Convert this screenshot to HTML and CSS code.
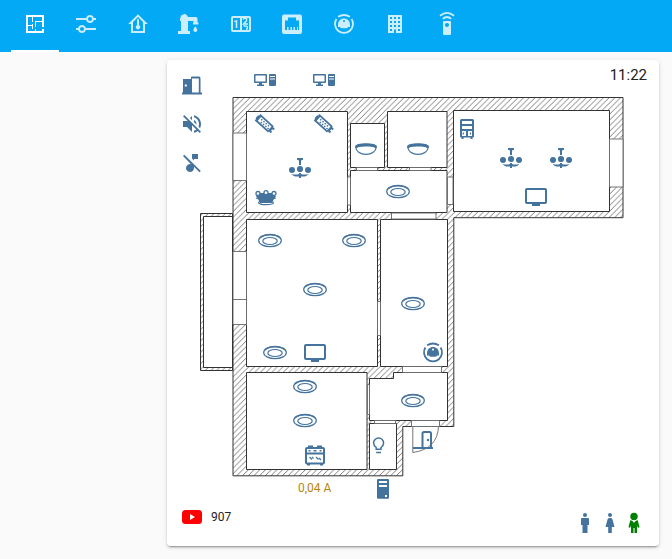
FILE: index.html
```
<!DOCTYPE html>
<html lang="en">
<head>
<meta charset="utf-8">
<title>Home</title>
<link rel="stylesheet" href="styles.css">
</head>
<body>
<nav class="tabs">
  <a class="tab active"><svg viewBox="0 0 24 24"><path d="M10,5V10H9V5H5V13H9V12H10V17H9V14H5V19H12V17H13V19H19V17H21V21H3V3H21V15H19V10H13V15H12V9H19V5H10Z"/></svg></a>
  <a class="tab"><svg viewBox="0 0 24 24"><path d="M8 13C6.14 13 4.59 14.28 4.14 16H2V18H4.14C4.59 19.72 6.14 21 8 21S11.41 19.72 11.86 18H22V16H11.86C11.41 14.28 9.86 13 8 13M8 19C6.9 19 6 18.1 6 17C6 15.9 6.9 15 8 15S10 15.9 10 17C10 18.1 9.1 19 8 19M19.86 6C19.41 4.28 17.86 3 16 3S12.59 4.28 12.14 6H2V8H12.14C12.59 9.72 14.14 11 16 11S19.41 9.72 19.86 8H22V6H19.86M16 9C14.9 9 14 8.1 14 7C14 5.9 14.9 5 16 5S18 5.9 18 7C18 8.1 17.1 9 16 9Z"/></svg></a>
  <a class="tab"><svg viewBox="0 0 24 24"><path fill-rule="evenodd" d="M12 2.2 21.8 12H19V21H5V12H2.2ZM12 5 7 10V19H17V10Z"/><path d="M11 8a1 1 0 0 1 2 0v5.3a2.1 2.1 0 1 1-2 0Z"/></svg></a>
  <a class="tab"><svg viewBox="0 0 24 24"><path d="M3.500 4.500Q3.500 3.200 5 3.200H5.500V2.700Q7.500 1.500 9.500 2.700V3.200Q10.800 3.200 10.800 5H19Q20.500 5 20.500 6.500V10.500H21.500V12.500H16V10.500H16.500V9H11V19H13V22H1V19H4V9H3V6H4Z"/><path d="M18.300 14.200Q20.300 16.700 20.300 18a2 2 0 0 1-4 0Q16.300 16.700 18.300 14.200Z"/></svg></a>
  <a class="tab"><svg viewBox="0 0 24 24"><path fill-rule="evenodd" d="M4 4H20a2 2 0 0 1 2 2V18a2 2 0 0 1-2 2H4a2 2 0 0 1-2-2V6a2 2 0 0 1 2-2ZM4 6V18H11V6ZM13 6V18H20V6Z"/><path d="M6.700 16V9.800L5.300 10.300V8.800L8.300 8V16Z"/><path class="line" d="M14 7.500Q14.500 6 16.500 6.300Q18.500 7 17.300 9L14.500 12H19M14.500 14Q18.500 13.500 18.500 15.500Q18.500 17 17 17.500"/></svg></a>
  <a class="tab"><svg viewBox="0 0 24 24"><path fill-rule="evenodd" d="M4 2.500H20a2 2 0 0 1 2 2V20a2 2 0 0 1-2 2H4a2 2 0 0 1-2-2V4.500a2 2 0 0 1 2-2ZM5 18H7V15H8.500V18H10.500V15H12V18H13.500V15H15V18H17V15H18V18H19V8.500H16V5.500H8V8.500H5Z"/></svg></a>
  <a class="tab"><svg viewBox="0 0 24 24"><use href="#vacuum" x="12" y="12"/></svg></a>
  <a class="tab"><svg viewBox="0 0 24 24"><path fill-rule="evenodd" d="M5 3V21H11V17.500H13V21H19V3ZM7 5H9V7H7ZM11 5H13V7H11ZM15 5H17V7H15ZM7 9H9V11H7ZM11 9H13V11H11ZM15 9H17V11H15ZM7 13H9V15H7ZM11 13H13V15H11ZM15 13H17V15H15ZM7 17H9V19H7ZM15 17H17V19H15Z"/></svg></a>
  <a class="tab"><svg viewBox="0 0 24 24"><path fill-rule="evenodd" d="M9 9H15a1 1 0 0 1 1 1V22a1 1 0 0 1-1 1H9a1 1 0 0 1-1-1V10a1 1 0 0 1 1-1ZM12 11a2 2 0 1 0 .01 0Z"/><path class="ray" d="M7.800 6.900Q12 3.200 16.200 6.900M5 3.800Q12-2 19 3.800"/></svg></a>
</nav>
<main class="page">
<section class="card">
<svg class="plan" viewBox="167 60 492 486">
  <defs>
    <pattern id="hatch" width="5.7" height="5.7" patternUnits="userSpaceOnUse"><path class="hatch" d="M-1 6.700 6.700-1M-1 1 1-1M4.700 6.700 6.700 4.700"/></pattern>
    <g id="ring"><ellipse class="s12" rx="11.300" ry="6.200"/><ellipse class="s12" cy=".5" rx="7.200" ry="3.500"/><path class="s12" d="M-10-2.500Q-7-5.700 0-5.700T10-2.500"/></g>
    <g id="dome"><path d="M-11-1.500C-11-6 11-6 11-1.500L10 .5C8.500-2.200-8.500-2.200-10 .5Z"/><path class="s12" d="M-10.300-1C-10 3-6 6.300 0 6.300S10 3 10.300-1"/></g>
    <g id="chandelier"><path d="M-3-12H3V-10.300L1-9.500V-5H-1V-9.500L-3-10.300Z"/><circle cx="-8" r="3"/><circle cy="-1" r="3.100"/><circle cx="8" r="3"/><path d="M-8.500 4Q-4 5-1 4V3H1V4Q4 5 8.500 4Q6.500 7 1 6.500V8H-1V6.500Q-6.500 7-8.500 4Z"/></g>
    <g id="strip" transform="rotate(42)"><path fill-rule="evenodd" d="M-10-4.300H8V-3H10.500V-1H9V1H10.500V3H8V4.300H-10V2H-11V-2H-10ZM-7.500-2.500V2.500H6.500V-2.500Z"/><path class="dots" d="M-6-1H6M-4.500 1.300H6"/></g>
    <g id="tv"><rect class="s2" x="-10" y="-8" width="20" height="14" rx="1"/><path d="M-4 6H4V9H-4Z"/></g>
    <g id="pc"><path fill-rule="evenodd" d="M-10-6H1Q2-6 2-5V2Q2 3 1 3H-3V4.500H-1V6H-8V4.500H-6V3H-10Q-11 3-11 2V-5Q-11-6-10-6ZM-9.500-4.500V1.500H.5V-4.500ZM5-6H10Q11-6 11-5V5Q11 6 10 6H5Q4 6 4 5V-5Q4-6 5-6ZM5-4V-3H10V-4ZM5-1.500V-.5H10V-1.500Z"/></g>
    <g id="vacuum"><path class="v" d="M-7.600-4.900A9 9 0 1 0 7.600-4.900M-5.900-7.200Q0-10.800 5.900-7.200"/><path fill-rule="evenodd" d="M-6 1C-6-7.600 6-7.600 6 1V3H4Q3.500 4.300 2 4.300H-2Q-3.500 4.300-4 3H-6ZM0-4a1 1 0 1 0 .01 0Z"/></g>
    <g id="man"><circle cy="-8" r="2"/><path d="M-3-5H3Q4-5 4-4V2H2.500V10H-2.500V2H-4V-4Q-4-5-3-5Z"/></g>
    <g id="woman"><circle cy="-8" r="2"/><path d="M-1-5H1Q2-5 2.500-3.500L4.500 4H1.800V10H-1.800V4H-4.500L-2.500-3.500Q-2-5-1-5Z"/></g>
  </defs>

  <path class="wall" d="M200.500 213.500H232.500V370.500H200.500Z"/>
  <path class="room" d="M203.500 216.500H232.500V367.500H203.500Z"/>
  <path class="wall" d="M233 97.500H623V217.700H453.800V426.500H402.800V475.800H233Z"/>
  <g class="room">
    <path d="M246.500 111.500H347.500V212.500H246.500Z"/>
    <path d="M350.500 123.500H384.500V167.500H350.500Z"/>
    <path d="M387.500 111.500H447V167.500H387.500Z"/>
    <path d="M350.500 170.500H447V212.500H350.500Z"/>
    <path d="M453.500 110.500H609.500V211.500H453.500Z"/>
    <path d="M246.500 219.500H377.500V366.500H246.500Z"/>
    <path d="M380.500 219.500H447.500V366.500H380.500Z"/>
    <path d="M246.500 372.500H367V469.500H246.500Z"/>
    <path d="M369.500 378.500H393.500V372.500H447.500V420.500H369.500Z"/>
    <path d="M369.500 423.500H396.500V469.500H369.500Z"/>
  </g>
  <g class="opening">
    <path d="M233 133H246.500V180.500H233ZM233 251.500H246.500V324.500H233ZM233 299.500H246.500M609.500 139H623V187H609.500Z"/>
    <path d="M347.500 177H350.500V205H347.500ZM356.500 167.500H377.500V170.500H356.500ZM409.500 167.500H431V170.500H409.500ZM447.500 177H453V204.500H447.500Z"/>
    <path d="M391.500 213H436V219H391.500ZM377.500 301.500H380.500V335.500H377.500ZM402.500 366.500H441.500V372.500H402.500Z"/>
    <path d="M367.500 384.500H369.500V414.500H367.500ZM374.500 420.500H395.500V423.500H374.500ZM411.500 420.500H439.500V426.500H411.500Z"/>
    <path d="M412.800 426.500H438.500Q437.500 449 412.800 452.500Z"/>
  </g>

  <g class="icons">
    <path d="M182 92.500H183V79H191V77.500Q191 76.500 192 76.500H199Q200.500 76.500 200.500 78.500V92.500H202V94.500H182Z"/>
    <path class="cut" d="M192 78.500H198.800V92.500H192ZM184.800 84.500H186.800V86.500H184.800Z"/>
    <g transform="translate(180 112)"><path d="M12 4 9.900 6.100 12 8.200M4.300 3 3 4.300 7.700 9H3V15H7L12 20V13.300L16.300 17.500C15.600 18 14.900 18.500 14 18.700V20.800C15.400 20.500 16.600 19.800 17.700 18.900L19.700 21 21 19.700 12 10.700ZM19 12C19 12.900 18.800 13.800 18.500 14.600L20 16.200C20.700 14.900 21 13.500 21 12 21 7.700 18 4.100 14 3.200V5.300C16.900 6.200 19 8.800 19 12M16.500 12C16.500 10.200 15.500 8.700 14 8V10.200L16.500 12.600V12Z"/></g>
    <g transform="translate(180 151)"><path d="M12 3V7.500L14 9.500V8H18V3ZM4.300 3.700 3 5 11 13.200A4 4 0 1 0 14 17V15.700L19.500 21.200 20.800 20Z"/></g>
    <use href="#pc" x="265" y="80"/><use href="#pc" x="324" y="80"/>
    <g transform="translate(265 124)"><use href="#strip"/></g><g transform="translate(324 124)"><use href="#strip"/></g>
    <use href="#chandelier" x="300" y="170"/><use href="#chandelier" x="511" y="160"/><use href="#chandelier" x="561" y="160"/>
    <use href="#dome" x="366" y="148"/><use href="#dome" x="418" y="148"/>
    <use href="#ring" x="398" y="191.500"/><use href="#ring" x="270" y="240.500"/><use href="#ring" x="354" y="240.500"/>
    <use href="#ring" x="315" y="289.500"/><use href="#ring" x="275" y="352.500"/><use href="#ring" x="413" y="303.500"/>
    <use href="#ring" x="305" y="386.500"/><use href="#ring" x="305" y="420.500"/><use href="#ring" x="413" y="400.500"/>
    <use href="#tv" x="536" y="197"/><use href="#tv" x="315" y="353"/>
    <use href="#vacuum" x="433" y="352.500"/>
    <g transform="translate(266 198)"><path d="M-10-2-6-5H6L10-2 8 1 6 5H-6L-8 1Z"/><circle class="bulb" cx="-8" cy="-4.500" r="2"/><circle class="bulb" cx="8" cy="-4.500" r="2"/><circle class="bulb" cy="-5.300" r="2"/><ellipse class="s12" cy="4.800" rx="7.500" ry="1.800"/><path class="s12" d="M-10 0-6 1M10 0 6 1"/></g>
    <path fill-rule="evenodd" d="M461.500 119H472.500Q474 119 474 120.500V136.500Q474 137.500 472.500 137.500V139H470.500V137.500H463.500V139H461.500V137.500Q460 137.500 460 136.500V120.500Q460 119 461.500 119ZM462 121V124H472V121ZM462 126V129H472V126ZM462 131V136H466V131ZM468 131V136H472V131Z"/>
    <path class="s12" d="M463.300 132.500V134.500M470.500 132.500V134.500"/>
    <rect class="s2" x="306" y="448" width="18" height="15.500" rx="1"/><path d="M308 447V445.500H313V447H317V445.500H322V447ZM306 452.500H324V454.500H306ZM307 464H310V465.500H307ZM320 464H323V465.500H320ZM308.500 450H310.500V451.500H308.500ZM313.500 450H316.500V451.500H313.500ZM319.500 450H321.500V451.500H319.500Z"/><path class="s12" d="M309.500 457 312 459.500M312 457 313.500 458.500M316 457 318.500 459.500M319 458 321 460"/>
    <path class="s15" d="M376.200 449.200V447.500Q373.600 445.700 373.600 443A5 5 0 0 1 383.600 443Q383.600 445.700 381 447.500V449.200ZM376.200 452.500H381"/>
    <path fill-rule="evenodd" d="M378 479H388Q389 479 389 480V497.500Q389 498.700 388 498.700H378Q377 498.700 377 497.500V480Q377 479 378 479ZM379 481V483H387V481ZM379 485V487H387V485ZM385 495V497H387V495Z"/>
    <path class="s2" d="M422.500 448V433.500Q422.500 432 424 432H429.500Q431 432 431 433.500V448M413 448H433"/><circle cx="428" cy="440" r="1.200"/>
    <use href="#man" x="585" y="523"/><use href="#woman" x="610" y="523"/>
    <g class="home" transform="translate(634 523)"><circle cy="-6.500" r="3.700"/><path d="M-3.500-3 0-1 3.500-3Q4-2 5.500 4L4 5 3 2.500V10H.5V5H-.5V10H-3V2.500L-4 5-5.500 4Q-4-2-3.500-3Z"/><path class="cut" d="M-1.500-2.500H1.500L0 0Z"/></g>
  </g>
</svg>
<span class="clock">11:22</span>
<span class="current">0,04 A</span>
<div class="subs"><svg viewBox="0 0 20 14"><rect class="tube" width="20" height="14" rx="3.500"/><path class="play" d="M8 4V10L13 7Z"/></svg><span>907</span></div>
</section>
</main>
</body>
</html>
```

FILE: styles.css
```
body {
  margin: 0;
  background: #fafafa;
  font-family: Roboto, sans-serif;
  color: #212121;
  overflow: hidden;
}
.tabs {
  display: flex;
  gap: 3.45px;
  height: 52px;
  padding-left: 11px;
  background: #03a9f4;
}
.tab {
  display: flex;
  flex: 0 0 48px;
  box-sizing: border-box;
  height: 52px;
  align-items: center;
  justify-content: center;
  padding-bottom: 4px;
  fill: #fff;
  color: #fff;
  opacity: .8;
}
.tab.active {
  opacity: 1;
  border-bottom: 2px solid #fff;
  padding-bottom: 2px;
}
.tab svg {
  width: 24px;
  height: 24px;
  overflow: visible;
}
.line { fill: none; stroke: #fff; stroke-width: 1.5; }
.ray { fill: none; stroke: #fff; stroke-width: 1.8; }
.page { padding: 8px 13px 13px 167px; }
.card {
  position: relative;
  height: 486px;
  background: #fff;
  border-radius: 4px;
  box-shadow: 0 2px 2px rgba(0,0,0,.14), 0 1px 5px rgba(0,0,0,.12), 0 3px 1px -2px rgba(0,0,0,.2);
}
.plan { display: block; width: 492px; height: 486px; }
.hatch { fill: none; stroke: #666; stroke-width: .85; }
.wall { fill: url(#hatch); stroke: #333; stroke-width: 1; }
.room { fill: #fff; stroke: #333; stroke-width: 1; }
.opening { fill: #fff; stroke: #666; stroke-width: .9; }
.icons { fill: #44739e; color: #44739e; }
.s12, .s15, .s2, .v { fill: none; stroke: currentColor; stroke-width: 1.2; }
.s15 { stroke-width: 1.5; }
.s2 { stroke-width: 2; }
.v { stroke-width: 1.8; }
.dots { fill: none; stroke: currentColor; stroke-width: 1.5; stroke-dasharray: 1.5 1.5; }
.bulb { fill: #fff; stroke: currentColor; stroke-width: 1.3; }
.cut { fill: #fff; }
.home { fill: #008000; }
.clock {
  position: absolute;
  top: 5px;
  right: 12px;
  font-size: 15px;
  line-height: 20px;
}
.current {
  position: absolute;
  left: 131px;
  top: 420px;
  font-size: 12px;
  line-height: 16px;
  color: #b8860b;
}
.subs {
  position: absolute;
  left: 15px;
  top: 449px;
  display: flex;
  align-items: center;
  gap: 9px;
  font-size: 12px;
  line-height: 16px;
}
.subs svg { width: 20px; height: 14px; }
.tube { fill: #f00; }
.play { fill: #fff; }
```
